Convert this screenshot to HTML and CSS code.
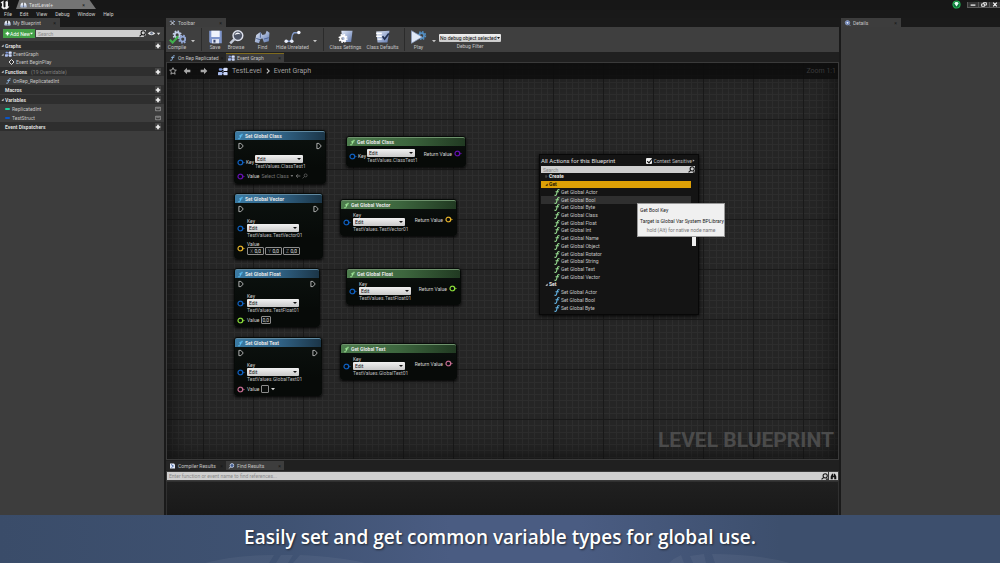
FILE: index.html
```html
<!DOCTYPE html>
<html lang="en">
<head>
<meta charset="utf-8">
<title>TestLevel - Blueprint Editor</title>
<link rel="stylesheet" href="styles.css">
</head>
<body>
<svg class="defs" aria-hidden="true">
  <defs>
    <linearGradient id="steel" x1="0" y1="0" x2="1" y2="1"><stop offset="0" stop-color="#e6edfa"/><stop offset="1" stop-color="#5f79b0"/></linearGradient>
    <symbol id="i-f" viewBox="0 0 8 10"><path d="M7.2 1.2C5.6.3 4.8 1.6 4.4 3.4L3.3 7.6C2.9 9 2 9.4.8 8.8M2.4 4h3.8" fill="none" stroke="currentColor" stroke-width="1.600" stroke-linecap="round"/></symbol>
    <symbol id="i-exec" viewBox="0 0 10 12"><path d="M1.5 1.5h3.2L8.7 6l-4 4.500H1.500z" fill="none" stroke="#dcdcdc" stroke-width="1.300" stroke-linejoin="round"/></symbol>
    <symbol id="i-pin" viewBox="0 0 12 10"><circle cx="5" cy="5" r="3.500" fill="#06090c" stroke="currentColor" stroke-width="1.800"/><path d="M9.500 3.500L11.700 5 9.500 6.500z" fill="currentColor"/></symbol>
    <symbol id="i-plus" viewBox="0 0 8 8"><path d="M4 1v6M1 4h6" stroke="currentColor" stroke-width="2.200"/></symbol>
    <symbol id="i-open" viewBox="0 0 8 8"><path d="M7 1v6H1z" fill="currentColor"/></symbol>
    <symbol id="i-down" viewBox="0 0 8 8"><path d="M0 2h8L4 6.500z" fill="currentColor"/></symbol>
    <symbol id="i-search" viewBox="0 0 10 10"><circle cx="6" cy="4" r="3" fill="none" stroke="currentColor" stroke-width="1.500"/><path d="M4 6.200L.8 9.200M7 8.800h3" stroke="currentColor" stroke-width="1.700"/></symbol>
    <symbol id="i-graph" viewBox="0 0 12 10"><path d="M2.500 2.500h7M2.500 7.500h7M3 7l6-4" stroke="#7b93cf" stroke-width="1"/><rect x="0" y="5.500" width="5" height="4" rx="1" fill="#a9bdf0"/><rect x="6.500" y="5.500" width="5" height="4" rx="1" fill="#cbd7fa"/><rect x="1" y="1" width="4" height="3" rx="1" fill="#7e98dc"/><rect x="6.500" y=".5" width="5" height="4" rx="1" fill="#dbe4ff"/></symbol>
    <symbol id="i-book" viewBox="0 0 12 10"><path d="M1 9V4l2-3h2v4h2V1h2l2 3v5z" fill="#e8edf7"/><path d="M1 9h10V6H1z" fill="#a8b8d8"/><path d="M6 5v4" stroke="#35405c"/></symbol>
    <symbol id="i-gear" viewBox="0 0 12 12"><circle cx="6" cy="6" r="4.600" fill="none" stroke="currentColor" stroke-width="2" stroke-dasharray="1.900 1.710"/><circle cx="6" cy="6" r="3" fill="none" stroke="currentColor" stroke-width="2.200"/></symbol>
    <symbol id="i-box" viewBox="0 0 10 8"><rect x=".5" y=".5" width="9" height="7" rx="1" fill="#727272" stroke="#a0a0a0"/><path d="M1.500 4q3.500 3 7 0" fill="none" stroke="#262626" stroke-width="1.300"/></symbol>
    <symbol id="i-lens" viewBox="0 0 12 12"><circle cx="7" cy="5" r="3.800" fill="#415b91" stroke="#dce5f8" stroke-width="1.500"/><path d="M4 8l-3 3" stroke="#dce5f8" stroke-width="2"/></symbol>
  </defs>
</svg>

<div class="editor">
  <header class="titlebar">
    <svg class="logo" viewBox="0 0 20 20" aria-label="Unreal"><path d="M1 6Q3 2 8 1 6 4 7 6v7q1 3 4 1V5l-1-1q3-1 5-4-1 3 1 4v9q2 0 3-2-1 6-7 8l-2-2-2 2Q3 17 2 13q2 1 2-1V8Q4 5 1 6z" fill="#f2f2f2"/></svg>
    <div class="level-tab"><svg viewBox="0 0 12 10"><use href="#i-book"/></svg><span>TestLevel+</span><i>×</i></div>
    <div class="window-controls">
      <svg class="source" viewBox="0 0 14 14" aria-hidden="true"><circle cx="7" cy="7" r="5.500" fill="#0b6d38" stroke="#24b352" stroke-width="1.800"/><path d="M3.500 5l2-2h3l2 2L7 10z" fill="#e7fff4"/></svg>
      <button type="button" aria-label="Minimize"><svg viewBox="0 0 10 8"><path d="M1 5h8" stroke="#fff" stroke-width="2"/></svg></button>
      <button type="button" aria-label="Restore"><svg viewBox="0 0 10 8"><path d="M1 3h5v4H1zM4 3V1h5v4H6" fill="none" stroke="#fff" stroke-width="1.400"/></svg></button>
      <button type="button" aria-label="Close"><svg viewBox="0 0 10 8"><path d="M2 1l6 6M8 1L2 7" stroke="#fff" stroke-width="2"/></svg></button>
    </div>
  </header>
  <nav class="menubar"><button type="button">File</button><button type="button">Edit</button><button type="button">View</button><button type="button">Debug</button><button type="button">Window</button><button type="button">Help</button></nav>

  <main class="dock">
    <aside class="blueprint">
      <div class="tab tab-blueprint"><svg viewBox="0 0 12 10"><use href="#i-book"/></svg><span>My Blueprint</span><i>×</i></div>
      <div class="panel">
        <div class="add-row">
          <button type="button" class="add"><svg viewBox="0 0 8 8"><use href="#i-plus"/></svg>Add New<svg class="caret" viewBox="0 0 8 8"><use href="#i-down"/></svg></button>
          <label class="search"><input type="text" placeholder="Search" aria-label="Search blueprint"><svg viewBox="0 0 10 10"><use href="#i-search"/></svg></label>
          <button type="button" class="eye" aria-label="View options"><svg viewBox="0 0 20 10"><path d="M1 5q5-6 11 0-6 5-11 0z" fill="#e3e3e3"/><circle cx="6.500" cy="4.500" r="1.800" fill="#6f7b93"/><path d="M14 4h5l-2.500 3z" fill="#ddd"/></svg></button>
        </div>
        <section class="tree">
          <h3><svg viewBox="0 0 8 8"><use href="#i-open"/></svg>Graphs<button type="button" aria-label="Add graph"><svg viewBox="0 0 8 8"><use href="#i-plus"/></svg></button></h3>
          <p><svg class="arrow" viewBox="0 0 8 8"><use href="#i-open"/></svg><svg class="icon" viewBox="0 0 12 10"><use href="#i-graph"/></svg>EventGraph</p>
          <p class="nested"><svg class="icon" viewBox="0 0 12 12"><path d="M6 1l5 5-5 5-5-5z" fill="none" stroke="#eee" stroke-width="1.800"/><path d="M6 3.500L9 6 6 8.500z" fill="#222"/></svg>Event BeginPlay</p>
          <h3><svg viewBox="0 0 8 8"><use href="#i-open"/></svg>Functions<small>(19 Overridable)</small><button type="button" aria-label="Add function"><svg viewBox="0 0 8 8"><use href="#i-plus"/></svg></button></h3>
          <p class="item tall"><svg class="icon func" viewBox="0 0 8 10"><use href="#i-f"/></svg>OnRep_ReplicatedInt</p>
          <h3 class="plain flush">Macros<button type="button" aria-label="Add macro"><svg viewBox="0 0 8 8"><use href="#i-plus"/></svg></button></h3>
          <h3><svg viewBox="0 0 8 8"><use href="#i-open"/></svg>Variables<button type="button" aria-label="Add variable"><svg viewBox="0 0 8 8"><use href="#i-plus"/></svg></button></h3>
          <p class="item var"><b class="pill int"></b>ReplicatedInt<svg class="box" viewBox="0 0 10 8"><use href="#i-box"/></svg></p>
          <p class="item var"><b class="pill struct"></b>TestStruct<svg class="box" viewBox="0 0 10 8"><use href="#i-box"/></svg></p>
          <h3 class="plain flush">Event Dispatchers<button type="button" aria-label="Add dispatcher"><svg viewBox="0 0 8 8"><use href="#i-plus"/></svg></button></h3>
        </section>
      </div>
    </aside>

    <section class="center">
      <div class="tab tab-toolbar"><svg viewBox="0 0 12 12"><path d="M2 2l8 8M10 2L2 10" stroke="#dfe7f5" stroke-width="1.800"/><path d="M1 3l2-2M8 1l3 3" stroke="#8fa6d6" stroke-width="2"/></svg><span>Toolbar</span><i>×</i></div>
      <div class="toolbar">
        <button type="button" class="t-compile"><svg viewBox="0 0 24 20"><g color="#c3cfe8"><svg x="3" y="0" width="12" height="12"><use href="#i-gear"/></svg></g><g color="#93a7d4"><svg x="11" y="6" width="13" height="13"><use href="#i-gear"/></svg></g><path d="M1 14l4 4 8-9" fill="none" stroke="#41b04d" stroke-width="3"/></svg>Compile</button>
        <button type="button" class="more" aria-label="Compile options"><svg viewBox="0 0 8 8"><use href="#i-down"/></svg></button>
        <hr>
        <button type="button" class="t-save"><svg viewBox="0 0 24 20"><path d="M3 1h18v18H5l-2-2z" fill="#7f96cc"/><path d="M6 1h12v9H6z" fill="#eef3fc"/><path d="M7 13h10v6H7z" fill="#dfe5f2"/><path d="M9 14h3v4H9z" fill="#39466b"/></svg>Save</button>
        <button type="button" class="t-browse"><svg viewBox="0 0 24 20"><circle cx="14" cy="8" r="7" fill="#4e5566" stroke="#dfe3ee" stroke-width="2"/><path d="M9 7q4-6 9-1-4-1-9 1z" fill="#f5f7fb"/><path d="M9 13l-6 6" stroke="#c5ccda" stroke-width="3.500"/></svg>Browse</button>
        <button type="button" class="t-find"><svg viewBox="0 0 24 20"><path d="M3 7l6-4 3 4 4-1 2-5 4 3-1 12-7 2-2-6-3 1-2 6-6-2z" fill="url(#steel)"/><path d="M3 12l6 2M14 13l7-2M9 3v8" stroke="#31497f"/></svg>Find</button>
        <button type="button" class="t-hide"><svg viewBox="0 0 24 20"><path d="M3 16h5q3 0 3-5t3-7h7" fill="none" stroke="#829ac9" stroke-width="2"/><circle cx="3" cy="16" r="2.500" fill="#e8eefb"/><circle cx="11" cy="16" r="2.500" fill="#e8eefb"/><circle cx="21" cy="3.500" r="2.500" fill="#f4f7ff"/></svg>Hide Unrelated</button>
        <button type="button" class="more" aria-label="Hide options"><svg viewBox="0 0 8 8"><use href="#i-down"/></svg></button>
        <hr>
        <button type="button" class="t-wide"><svg viewBox="0 0 24 20"><path d="M6 1h16l-2 16H8z" fill="url(#steel)"/><g color="#fff"><svg x="0" y="5" width="14" height="14"><use href="#i-gear"/></svg></g></svg>Class Settings</button>
        <button type="button" class="t-wide"><svg viewBox="0 0 24 20"><path d="M3 2l19-1-3 17H5z" fill="url(#steel)"/><path d="M3 5h8M3 9h8M5 13h6" stroke="#fff" stroke-width="2"/><path d="M12 9l3 4 6-8" fill="none" stroke="#223050" stroke-width="2.500"/></svg>Class Defaults</button>
        <hr>
        <button type="button" class="t-play"><svg viewBox="0 0 24 20"><g color="#528dc1"><svg x="8" y="1" width="16" height="16"><use href="#i-gear"/></svg></g><path d="M2 1l15 9-15 9z" fill="#dfe8f7" stroke="#8da0c4"/></svg>Play</button>
        <button type="button" class="more" aria-label="Play options"><svg viewBox="0 0 8 8"><use href="#i-down"/></svg></button>
        <div class="debug"><span class="select"><select id="debug"><option>No debug object selected</option></select></span><label for="debug">Debug Filter</label></div>
      </div>

      <div class="tabs doc-tabs">
        <div class="doc"><svg class="func" viewBox="0 0 8 10"><use href="#i-f"/></svg><span>On Rep Replicated</span><i>×</i></div>
        <div class="doc active"><svg viewBox="0 0 12 10"><use href="#i-graph"/></svg><span>Event Graph</span><i>×</i></div>
      </div>

      <div class="graph">
        <svg class="grid" aria-hidden="true">
          <defs><pattern id="grid" x="36" y="6" width="50" height="50" patternUnits="userSpaceOnUse"><path d="M6.500 0v50M13.500 0v50M19.500 0v50M25.500 0v50M31.500 0v50M38.500 0v50M44.500 0v50M0 6.500h50M0 13.500h50M0 19.500h50M0 25.500h50M0 31.500h50M0 38.500h50M0 44.500h50" stroke="#2d2d2d"/><path d="M.5 0v50M0 .5h50" stroke="#191919"/></pattern></defs>
          <rect width="100%" height="100%" fill="url(#grid)"/>
        </svg>
        <div class="crumbs">
          <button type="button" aria-label="Favorite"><svg viewBox="0 0 12 12"><path d="M6 1l1.500 3.400 3.500.4-2.600 2.400.8 3.600L6 9l-3.200 1.800.8-3.600L1 4.800l3.500-.4z" fill="none" stroke="#c2c2c2" stroke-width="1.200"/></svg></button>
          <button type="button" class="nav" aria-label="Back"><svg viewBox="0 0 12 12"><path d="M6 1v3h5v4H6v3L1 6z" fill="#a7a7a7"/></svg></button>
          <button type="button" class="nav fwd" aria-label="Forward"><svg viewBox="0 0 12 12"><path d="M6 1v3H1v4h5v3l5-5z" fill="#a7a7a7"/></svg></button>
          <svg class="crumb-icon" viewBox="0 0 12 10"><use href="#i-graph"/></svg>
          <a href="#">TestLevel</a><svg class="chev" viewBox="0 0 6 10"><path d="M1 1l4 4-4 4" fill="none" stroke="#c6c6c6" stroke-width="1.800"/></svg><a href="#">Event Graph</a>
          <span class="zoom">Zoom 1:1</span>
        </div>

        <article class="node set n-set-class">
          <h4><svg viewBox="0 0 8 10"><use href="#i-f"/></svg>Set Global Class</h4>
          <div class="exec"><svg viewBox="0 0 10 12"><use href="#i-exec"/></svg><svg viewBox="0 0 10 12"><use href="#i-exec"/></svg></div>
          <div class="pin key inline"><svg viewBox="0 0 12 10"><use href="#i-pin"/></svg><label for="k1">Key</label><div><span class="select"><select id="k1"><option>Edit</option></select></span><small>TestValues.ClassTest1</small></div></div>
          <div class="pin value class-pin"><svg viewBox="0 0 12 10"><use href="#i-pin"/></svg><label for="v1">Value</label><span class="select dark"><select id="v1"><option>Select Class</option></select></span><svg class="asset" viewBox="0 0 22 10"><path d="M9 5H2M5 2L2 5l3 3" fill="none" stroke="#777" stroke-width="1.500"/><circle cx="18" cy="4" r="2.500" fill="none" stroke="#666" stroke-width="1.300"/><path d="M16 6l-3 3" stroke="#666" stroke-width="1.300"/></svg></div>
        </article>

        <article class="node set n-set-vector">
          <h4><svg viewBox="0 0 8 10"><use href="#i-f"/></svg>Set Global Vector</h4>
          <div class="exec"><svg viewBox="0 0 10 12"><use href="#i-exec"/></svg><svg viewBox="0 0 10 12"><use href="#i-exec"/></svg></div>
          <div class="pin key"><svg viewBox="0 0 12 10"><use href="#i-pin"/></svg><div><label for="k2">Key</label><span class="select"><select id="k2"><option>Edit</option></select></span><small>TestValues.TestVector01</small></div></div>
          <div class="pin value vector-pin"><svg viewBox="0 0 12 10"><use href="#i-pin"/></svg><div><span>Value</span><div class="xyz"><label>X<input type="text" value="0,0"></label><label>Y<input type="text" value="0,0"></label><label>Z<input type="text" value="0,0"></label></div></div></div>
        </article>

        <article class="node set n-set-float">
          <h4><svg viewBox="0 0 8 10"><use href="#i-f"/></svg>Set Global Float</h4>
          <div class="exec"><svg viewBox="0 0 10 12"><use href="#i-exec"/></svg><svg viewBox="0 0 10 12"><use href="#i-exec"/></svg></div>
          <div class="pin key"><svg viewBox="0 0 12 10"><use href="#i-pin"/></svg><div><label for="k3">Key</label><span class="select"><select id="k3"><option>Edit</option></select></span><small>TestValues.TestFloat01</small></div></div>
          <div class="pin value float-pin"><svg viewBox="0 0 12 10"><use href="#i-pin"/></svg><label for="v3">Value</label><input id="v3" type="text" value="0,0"></div>
        </article>

        <article class="node set n-set-text">
          <h4><svg viewBox="0 0 8 10"><use href="#i-f"/></svg>Set Global Text</h4>
          <div class="exec"><svg viewBox="0 0 10 12"><use href="#i-exec"/></svg><svg viewBox="0 0 10 12"><use href="#i-exec"/></svg></div>
          <div class="pin key"><svg viewBox="0 0 12 10"><use href="#i-pin"/></svg><div><label for="k4">Key</label><span class="select"><select id="k4"><option>Edit</option></select></span><small>TestValues.GlobalText01</small></div></div>
          <div class="pin value text-pin"><svg viewBox="0 0 12 10"><use href="#i-pin"/></svg><label for="v4">Value</label><input id="v4" class="blank" type="text"><svg class="caret" viewBox="0 0 8 8"><use href="#i-down"/></svg></div>
        </article>

        <article class="node get n-get-class">
          <h4><svg viewBox="0 0 8 10"><use href="#i-f"/></svg>Get Global Class</h4>
          <div class="io">
            <div class="pin key inline"><svg viewBox="0 0 12 10"><use href="#i-pin"/></svg><label for="k5">Key</label><div><span class="select"><select id="k5"><option>Edit</option></select></span><small>TestValues.ClassTest1</small></div></div>
            <div class="pin out class-pin"><span>Return Value</span><svg viewBox="0 0 12 10"><use href="#i-pin"/></svg></div>
          </div>
        </article>
        <article class="node get n-get-vector">
          <h4><svg viewBox="0 0 8 10"><use href="#i-f"/></svg>Get Global Vector</h4>
          <div class="io">
            <div class="pin key"><svg viewBox="0 0 12 10"><use href="#i-pin"/></svg><div><label for="k6">Key</label><span class="select"><select id="k6"><option>Edit</option></select></span><small>TestValues.TestVector01</small></div></div>
            <div class="pin out vector-pin"><span>Return Value</span><svg viewBox="0 0 12 10"><use href="#i-pin"/></svg></div>
          </div>
        </article>
        <article class="node get n-get-float">
          <h4><svg viewBox="0 0 8 10"><use href="#i-f"/></svg>Get Global Float</h4>
          <div class="io">
            <div class="pin key"><svg viewBox="0 0 12 10"><use href="#i-pin"/></svg><div><label for="k7">Key</label><span class="select"><select id="k7"><option>Edit</option></select></span><small>TestValues.TestFloat01</small></div></div>
            <div class="pin out float-pin"><span>Return Value</span><svg viewBox="0 0 12 10"><use href="#i-pin"/></svg></div>
          </div>
        </article>
        <article class="node get n-get-text">
          <h4><svg viewBox="0 0 8 10"><use href="#i-f"/></svg>Get Global Text</h4>
          <div class="io">
            <div class="pin key"><svg viewBox="0 0 12 10"><use href="#i-pin"/></svg><div><label for="k8">Key</label><span class="select"><select id="k8"><option>Edit</option></select></span><small>TestValues.GlobalText01</small></div></div>
            <div class="pin out text-pin"><span>Return Value</span><svg viewBox="0 0 12 10"><use href="#i-pin"/></svg></div>
          </div>
        </article>

        <div class="actions">
          <div class="actions-head"><strong>All Actions for this Blueprint</strong><label><input type="checkbox" checked>Context Sensitive</label><svg viewBox="0 0 8 8"><path d="M2 1l5 3-5 3z" fill="#aaa"/></svg></div>
          <label class="search"><input type="text" placeholder="Search" aria-label="Search actions"><svg viewBox="0 0 10 10"><use href="#i-search"/></svg></label>
          <ul>
            <li class="cat"><svg viewBox="0 0 8 8"><path d="M2 1l4 3-4 3z" fill="none" stroke="#999"/></svg>Create</li>
            <li class="cat selected"><svg viewBox="0 0 8 8"><use href="#i-open"/></svg>Get</li>
            <li><svg viewBox="0 0 8 10"><use href="#i-f"/></svg>Get Global Actor</li>
            <li class="hover"><svg viewBox="0 0 8 10"><use href="#i-f"/></svg>Get Global Bool</li>
            <li><svg viewBox="0 0 8 10"><use href="#i-f"/></svg>Get Global Byte</li>
            <li><svg viewBox="0 0 8 10"><use href="#i-f"/></svg>Get Global Class</li>
            <li><svg viewBox="0 0 8 10"><use href="#i-f"/></svg>Get Global Float</li>
            <li><svg viewBox="0 0 8 10"><use href="#i-f"/></svg>Get Global Int</li>
            <li><svg viewBox="0 0 8 10"><use href="#i-f"/></svg>Get Global Name</li>
            <li><svg viewBox="0 0 8 10"><use href="#i-f"/></svg>Get Global Object</li>
            <li><svg viewBox="0 0 8 10"><use href="#i-f"/></svg>Get Global Rotator</li>
            <li><svg viewBox="0 0 8 10"><use href="#i-f"/></svg>Get Global String</li>
            <li><svg viewBox="0 0 8 10"><use href="#i-f"/></svg>Get Global Text</li>
            <li><svg viewBox="0 0 8 10"><use href="#i-f"/></svg>Get Global Vector</li>
            <li class="cat"><svg viewBox="0 0 8 8"><use href="#i-open"/></svg>Set</li>
            <li class="setter"><svg viewBox="0 0 8 10"><use href="#i-f"/></svg>Set Global Actor</li>
            <li class="setter"><svg viewBox="0 0 8 10"><use href="#i-f"/></svg>Set Global Bool</li>
            <li class="setter"><svg viewBox="0 0 8 10"><use href="#i-f"/></svg>Set Global Byte</li>
          </ul>
          <div class="thumb"></div>
          <div class="tooltip" role="tooltip"><p>Get Bool Key</p><p>Target is Global Var System BPLibrary</p><small>hold (Alt) for native node name</small></div>
        </div>
        <div class="watermark">LEVEL BLUEPRINT</div>
      </div>

      <div class="tabs result-tabs">
        <div class="doc"><svg viewBox="0 0 12 12"><path d="M1 1h8l2 2v8H1z" fill="#e3eaf8"/><path d="M3 3l5 3-4 3" fill="none" stroke="#3e63a5" stroke-width="1.800"/></svg><span>Compiler Results</span><i>×</i></div>
        <div class="doc active"><svg viewBox="0 0 12 12"><use href="#i-lens"/></svg><span>Find Results</span><i>×</i></div>
      </div>
      <div class="find-row">
        <label class="search"><input type="text" placeholder="Enter function or event name to find references..." aria-label="Find references"><svg viewBox="0 0 10 10"><use href="#i-search"/></svg></label>
        <button type="button" aria-label="Find in all blueprints"><svg viewBox="0 0 10 10"><path d="M1 9V5l2-4h1.500v3h1V1H7l2 4v4H6V6H4v3z" fill="#111"/></svg></button>
      </div>
      <div class="results"></div>
    </section>

    <aside class="details">
      <div class="tab tab-details"><svg viewBox="0 0 12 12"><circle cx="6" cy="5.500" r="4.500" fill="#5b75ae" stroke="#b7c5e4"/><circle cx="6" cy="5.500" r="2" fill="#e6edfb"/><path d="M9 9l2.500 2.500" stroke="#8299c8" stroke-width="1.800"/></svg><span>Details</span><i>×</i></div>
      <div class="panel"></div>
    </aside>
  </main>
</div>

<footer class="caption">
  <svg viewBox="0 0 1000 48" preserveAspectRatio="none" aria-hidden="true"><path d="M205 48Q235 40 274 40L269 48zM281 40h12l-5 8h-12zM300 40q40 2 65 8h-72zM669 48q5-5 12-8l3 8zM690 41l14-2 2 9h-13zM712 39q45 0 78 9h-75z" fill="#ffffff" opacity=".05"/></svg>
  <p>Easily set and get common variable types for global use.</p>
</footer>
</body>
</html>
```
FILE: styles.css
```css
* { box-sizing: border-box; }
html, body { height: 100%; }
body {
  margin: 0;
  display: flex;
  flex-direction: column;
  overflow: hidden;
  background: #1c1c1c;
  color: #c4c4c4;
  font: 5px/8px Roboto, sans-serif;
}
p, h3, h4, ul { margin: 0; padding: 0; font-size: 5px; }
small { font-size: 5px; }
i { font-style: normal; }
svg { display: block; flex: none; }
button, input, select { font: inherit; color: inherit; margin: 0; padding: 0; border: 0; background: none; border-radius: 0; }
input { min-width: 0; outline: 0; }
.defs { position: absolute; width: 0; height: 0; }

.editor { flex: 1; min-height: 0; display: flex; flex-direction: column; }

/* Title bar and menu */
.titlebar { height: 10px; display: flex; align-items: flex-start; background: #171717; }
.logo { width: 10px; height: 10px; }
.level-tab {
  display: flex; align-items: center; gap: 2px;
  width: 80px; height: 9px; margin-left: 6px; padding: 0 11px 0 4px;
  background: #747474; color: #ddd;
  clip-path: polygon(4% 0, 92% 0, 100% 100%, 0 100%);
}
.level-tab svg { width: 7px; height: 6px; }
.level-tab i, .tab i, .doc i { margin-left: auto; color: #151515; }
.window-controls { margin-left: auto; display: flex; align-items: center; }
.window-controls button { width: 11px; height: 6px; background: #343434; border: 0 solid #5a5a5a; border-width: 0 0 1px 1px; }
.window-controls button svg { width: 6px; height: 5px; margin: 0 auto; }
.window-controls .source { width: 9px; height: 9px; margin: 0 6px 0 0; }
.menubar { height: 8px; padding-left: 4px; display: flex; gap: 8px; background: #191919; }
.menubar button { line-height: 8px; color: #d0d0d0; }

.dock { flex: 1; min-height: 0; display: grid; grid-template-columns: 164px minmax(0, 1fr) 159px; gap: 2px; background: #1a1a1a; }
.tab { display: flex; align-items: center; gap: 2px; height: 9px; padding: 0 4px; background: #3d3d3d; }
.tab svg { width: 7px; height: 6px; }
.tab-blueprint, .tab-toolbar, .tab-details { width: 60px; }
.tab-toolbar, .tab-details { padding-left: 3px; }
.blueprint, .details, .center { display: flex; flex-direction: column; min-width: 0; min-height: 0; }
.panel { flex: 1; background: #3d3d3d; }
.details .panel { background: #3c3c3c; }

/* Search boxes */
.search { display: flex; align-items: center; background: #cfcfcf; color: #151515; }
.search input { flex: 1; width: 0; height: 7px; padding-left: 2px; }
.search input::placeholder { color: #8b8b8b; opacity: 1; }
.search svg { width: 7px; height: 7px; }

/* My Blueprint */
.add-row { display: flex; align-items: center; gap: 1px; padding: 2px 3px; }
.add { display: flex; align-items: center; justify-content: space-between; width: 32px; height: 9px; padding: 0 2px; background: #43a047; color: #fff; white-space: nowrap; }
.add svg { width: 5px; height: 5px; }
.add .caret { width: 3px; height: 3px; }
.add-row .search { flex: 1; height: 7px; }
.eye { width: 14px; }
.eye svg { width: 14px; height: 7px; margin: 0 auto; }
.tree h3 { display: flex; align-items: center; gap: 1px; height: 9px; padding: 0 3px 0 1px; margin-top: 1px; background: #2e2e2e; color: #dedede; font-weight: 700; }
.tree h3 > svg, .tree .arrow { width: 3px; height: 3px; }
.tree h3 small { margin-left: 3px; color: #7e7e7e; font-weight: 400; }
.tree h3 button { margin-left: auto; width: 6px; height: 7px; background: #444; color: #f2f2f2; }
.tree h3 button svg { width: 6px; height: 6px; }
.tree h3.plain { padding-left: 5px; }
.tree h3.flush { margin-top: 0; }
.tree p { display: flex; align-items: center; gap: 1px; height: 8px; padding: 0 3px 0 1px; }
.tree .icon { width: 7px; height: 6px; }
.tree .nested { gap: 1px; padding-left: 8px; }
.tree .item { padding-left: 5px; }
.tree .tall { height: 9px; }
.tree .func, .doc .func { color: #8fb4dc; }
.tree .var { height: 9px; gap: 2px; }
.pill { width: 5px; height: 2px; border-radius: 1px; }
.pill.int { background: #1fd39b; }
.pill.struct { background: #0a55c8; }
.box { width: 6px; height: 6px; margin-left: auto; }

/* Toolbar */
.toolbar { display: flex; align-items: stretch; height: 25px; background: #3f3f3f; }
.toolbar button { display: flex; flex-direction: column; align-items: center; justify-content: center; white-space: nowrap; line-height: 6px; }
.toolbar button svg { width: 17px; height: 14px; }
.toolbar hr { width: 1px; margin: 1px 3px; border: 0; background: #2b2b2b; }
.toolbar .t-compile, .toolbar .t-browse { width: 22px; }
.toolbar .t-save { width: 20px; }
.toolbar .t-find { width: 31px; }
.toolbar .t-hide { width: 29px; margin-right: 3px; }
.toolbar .t-wide { width: 37px; }
.toolbar .t-play { width: 21px; }
.toolbar .more { width: 10px; }
.toolbar .more svg { width: 4px; height: 4px; margin-top: 2px; }
.debug { display: flex; flex-direction: column; align-items: center; padding-top: 7px; }
.debug label { line-height: 8px; }
.debug .select { width: 62px; }

.select { position: relative; display: block; width: 52px; height: 8px; background: linear-gradient(#f1f1f1, #c9c9c9); border-radius: 1px; color: #111; }
.select select { display: block; width: 100%; height: 8px; padding-left: 2px; appearance: none; line-height: 8px; outline: 0; }
.debug .select select { padding-left: 1px; }
.select::after { content: ""; position: absolute; right: 2px; top: 3px; width: 4px; height: 2px; background: currentColor; clip-path: polygon(0 0, 100% 0, 50% 100%); pointer-events: none; }
.debug .select::after { right: 1px; width: 3px; }

/* Document tabs */
.tabs { display: flex; align-items: flex-end; background: #202020; }
.doc { display: flex; align-items: center; gap: 2px; width: 60px; height: 9px; padding: 0 3px; background: #262626; white-space: nowrap; }
.doc svg { width: 7px; height: 6px; }
.doc.active { width: 58px; padding-left: 2px; background: #3d3d3d; }
.doc-tabs { height: 10px; }
.doc-tabs .active { border-top: 1px solid #806b1d; }
.result-tabs { height: 11px; padding-bottom: 1px; }

/* Graph canvas */
.graph { position: relative; flex: 1; min-height: 0; overflow: hidden; background: #252525; border: 1px solid #3a3a3a; }
.grid { position: absolute; inset: 0; width: 100%; height: 100%; }
.graph::before { content: ""; position: absolute; z-index: 1; inset: 0; box-shadow: inset 0 0 24px #0e0e0e; pointer-events: none; }
.crumbs { position: relative; z-index: 2; display: flex; align-items: center; height: 16px; padding: 0 2px; background: #0d0d0dd9; color: #a0a0a0; font-size: 7px; }
.crumbs button svg { width: 8px; height: 8px; }
.crumbs .nav { margin-left: 6px; }
.crumbs .nav + .nav { margin-left: 9px; }
.crumb-icon { width: 10px; height: 9px; margin: 0 4px 0 10px; }
.crumbs a { color: inherit; text-decoration: none; }
.chev { width: 4px; height: 6px; margin: 0 4px; }
.zoom { margin-left: auto; color: #3b3b3b; }

/* Nodes */
.node { position: absolute; z-index: 2; padding-bottom: 3px; border: 1px solid #070a08; border-radius: 3px; background: linear-gradient(#0c120f, #070a08 70%); box-shadow: 0 1px 3px #000; color: #d5d5d5; }
.node h4 { display: flex; align-items: center; gap: 2px; height: 9px; padding-left: 3px; border-radius: 2px 2px 0 0; color: #e6e6e6; font-weight: 700; }
.node h4 svg { width: 5px; height: 7px; }
.set h4 { background: linear-gradient(90deg, #3b7aa2, #316488 50%, #1b3547); border-top: 1px solid #6089a1; }
.set h4 svg { color: #5cc0f5; }
.get h4 { background: linear-gradient(90deg, #4d7d4d, #3d663e 50%, #213a22); border-top: 1px solid #6e926c; }
.get h4 svg { color: #a4ec9c; }
.exec { display: flex; justify-content: space-between; padding: 2px 3px; }
.exec svg { width: 6px; height: 8px; }
.pin { display: flex; align-items: center; gap: 2px; padding-left: 2px; line-height: 7px; white-space: nowrap; }
.pin > svg { width: 8px; height: 7px; }
.pin small, .pin div > label, .pin div > span:not(.select) { display: block; line-height: 6px; }
.pin small { color: #bdbdbd; }
.key > svg { color: #0f62c4; }
.inline { gap: 1px; }
.inline .select { width: 48px; }
.set .key { margin-top: 3px; }
.set .inline { margin-top: 3px; }
.value { margin-top: 3px; }
.class-pin > svg:not(.asset) { color: #6910b5; }
.vector-pin > svg { color: #e9b52a; }
.float-pin > svg { color: #8fe23c; }
.text-pin > svg:not(.caret) { color: #c96f93; }
.pin > .caret { width: 4px; height: 4px; }
.pin > .asset { width: 13px; height: 6px; }
.select.dark { width: 32px; background: none; color: #757575; }
.select.dark select { padding-left: 0; }
.select.dark::after { right: 0; width: 3px; }
.value > input, .xyz label { height: 8px; border: 1px solid #8c8c8c; border-radius: 1px; background: #0b0e0d; }
.value > input { width: 10px; line-height: 6px; }
.value > .blank { width: 8px; }
.pin .xyz { display: flex; gap: 1px; }
.pin .xyz label { display: flex; width: 17px; padding: 0 2px; color: #6d6d6d; }
.xyz input { flex: 1; width: 0; height: 6px; color: #e0e0e0; text-align: right; }
.io { display: flex; justify-content: space-between; align-items: flex-start; padding-top: 3px; }
.out { margin-top: 4px; padding: 0 3px 0 0; line-height: 6px; }

.n-set-class { left: 67px; top: 67px; width: 92px; }
.n-set-vector { left: 67px; top: 130px; width: 89px; }
.n-set-float { left: 67px; top: 205px; width: 86px; padding-bottom: 2px; }
.n-set-text { left: 67px; top: 274px; width: 88px; padding-bottom: 2px; }
.n-get-class { left: 179px; top: 73px; width: 120px; }
.n-get-vector { left: 173px; top: 136px; width: 117px; }
.n-get-float { left: 179px; top: 205px; width: 115px; }
.n-get-text { left: 173px; top: 280px; width: 117px; }
.n-get-class .out { margin-top: 1px; }

/* Action menu */
.actions { position: absolute; z-index: 3; left: 372px; top: 91px; width: 160px; height: 161px; display: flex; flex-direction: column; padding: 0 3px 2px 1px; background: #141414; border: 1px solid #080808; box-shadow: 0 1px 4px #000; }
.actions-head { display: flex; align-items: center; height: 11px; color: #bdbdbd; }
.actions-head strong { margin-right: auto; font-size: 6px; font-weight: 400; color: #e0e0e0; }
.actions-head label { display: flex; align-items: center; gap: 1px; }
.actions-head input { appearance: none; position: relative; width: 6px; height: 6px; background: #eee; border-radius: 1px; }
.actions-head input:checked::after { content: ""; position: absolute; left: 2px; top: 0; width: 2px; height: 4px; border: solid #111; border-width: 0 1px 1px 0; transform: rotate(40deg); }
.actions-head svg { width: 3px; height: 3px; }
.actions .search { height: 7px; flex: none; }
.actions ul { flex: 1; min-height: 0; display: grid; grid-auto-rows: 1fr; margin-right: 4px; list-style: none; }
.actions li { display: flex; align-items: center; gap: 1px; min-height: 0; padding-left: 13px; line-height: 7px; }
.actions li svg { width: 6px; height: 7px; color: #93d68d; }
.actions .setter svg { color: #62afdd; }
.actions .cat { padding-left: 4px; gap: 1px; color: #e8e8e8; font-weight: 700; }
.actions .cat svg { width: 3px; height: 3px; color: #ddd; }
.actions .selected { background: #dda006; color: #221a02; }
.actions .selected svg { color: #221a02; }
.actions .hover { background: #2f2f2f; }
.thumb { position: absolute; right: 2px; top: 81px; width: 4px; height: 10px; background: #eee; }
.tooltip { position: absolute; left: 97px; top: 48px; width: 88px; padding: 3px 2px; background: #f0f0f0; border: 1px solid #999; color: #1c1c1c; line-height: 6px; white-space: nowrap; }
.tooltip p + p { margin-top: 5px; }
.tooltip small { display: block; margin-top: 3px; text-align: center; color: #777; }

.watermark { position: absolute; z-index: 1; right: 4px; bottom: 4px; color: #4b4b4b; font: 700 21px/30px Roboto, sans-serif; }

/* Find results */
.find-row { display: flex; gap: 1px; height: 10px; padding: 1px 1px; background: #3a3a3a; }
.find-row .search { flex: 1; }
.find-row button { width: 9px; background: #cfcfcf; }
.find-row button svg { width: 7px; height: 7px; margin: 0 auto; }
.results { height: 34px; border: 1px solid #303030; border-bottom: 0; background: linear-gradient(#202020, #191919); }

/* Caption */
.caption { position: relative; flex: none; height: 48px; display: flex; justify-content: center; background: linear-gradient(90deg, #3a4c69, #3f5272 28%, #4a5c82 45%, #4a5c82 58%, #3d4f6d 78%, #3d4f6d); }
.caption svg { position: absolute; inset: 0; width: 100%; height: 100%; }
.caption p { position: relative; margin-top: 8px; color: #fff; font: 600 19px/28px "Open Sans", sans-serif; text-shadow: 1px 1px 2px #111a; }
```
